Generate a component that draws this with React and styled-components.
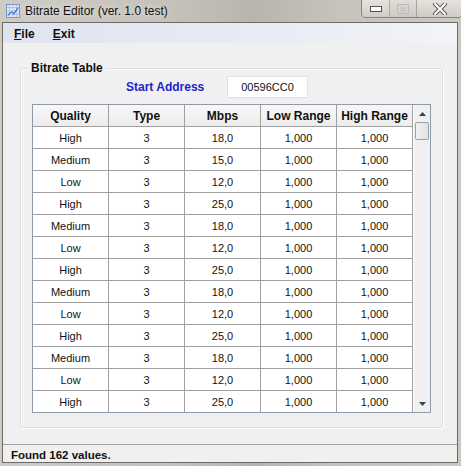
import React from 'react'
import styled, { createGlobalStyle } from 'styled-components'

const GlobalStyle = createGlobalStyle`
    html, body {
        margin: 0;
        padding: 0;
        background: #c9c5be;
    }
    * { box-sizing: border-box; }
`

const rows = [
    ['High', '3', '18,0'],
    ['Medium', '3', '15,0'],
    ['Low', '3', '12,0'],
    ['High', '3', '25,0'],
    ['Medium', '3', '18,0'],
    ['Low', '3', '12,0'],
    ['High', '3', '25,0'],
    ['Medium', '3', '18,0'],
    ['Low', '3', '12,0'],
    ['High', '3', '25,0'],
    ['Medium', '3', '18,0'],
    ['Low', '3', '12,0'],
    ['High', '3', '25,0'],
]

function App() {
    return (
        <>
            <GlobalStyle />
            <Window>
                <TitleBar>
                    <AppIcon viewBox="0 0 16 16">
                        <rect x="0.5" y="0.5" width="15" height="15" fill="#dfe9f7" stroke="#6d8fc4" />
                        <path d="M1 4h14M1 8h14M1 12h14M4 1v14M8 1v14M12 1v14" stroke="#a9c0e2" strokeWidth="1" />
                        <path d="M2 13 L6 9 L9 11 L14 4" stroke="#3b64b8" strokeWidth="1.3" fill="none" />
                    </AppIcon>
                    <Title>Bitrate Editor (ver. 1.0 test)</Title>
                    <CaptionButtons>
                        <CaptionBtn>
                            <svg width="12" height="6" viewBox="0 0 12 6">
                                <rect x="0.5" y="0.5" width="11" height="5" fill="#fff" stroke="#555" />
                            </svg>
                        </CaptionBtn>
                        <CaptionBtn $faded>
                            <svg width="12" height="10" viewBox="0 0 12 10">
                                <rect x="0.5" y="0.5" width="11" height="9" fill="none" stroke="#bbb" />
                                <rect x="3" y="3" width="6" height="4" fill="#c8c8c8" />
                            </svg>
                        </CaptionBtn>
                        <CaptionBtn $wide>
                            <svg width="14" height="12" viewBox="0 0 14 12">
                                <path d="M2 1 L12 11 M12 1 L2 11" stroke="#555" strokeWidth="4" strokeLinecap="round" />
                                <path d="M2 1 L12 11 M12 1 L2 11" stroke="#fff" strokeWidth="2" strokeLinecap="round" />
                            </svg>
                        </CaptionBtn>
                    </CaptionButtons>
                </TitleBar>
                <Client>
                    <MenuBar>
                        <MenuItem><u>F</u>ile</MenuItem>
                        <MenuItem><u>E</u>xit</MenuItem>
                    </MenuBar>
                    <Body>
                        <GroupBox>
                            <GroupLegend>Bitrate Table</GroupLegend>
                            <AddressRow>
                                <AddressLabel>Start Address</AddressLabel>
                                <AddressInput>00596CC0</AddressInput>
                            </AddressRow>
                            <Grid>
                                <Table>
                                    <HeaderRow>
                                        <HeadCell>Quality</HeadCell>
                                        <HeadCell>Type</HeadCell>
                                        <HeadCell>Mbps</HeadCell>
                                        <HeadCell>Low Range</HeadCell>
                                        <HeadCell>High Range</HeadCell>
                                    </HeaderRow>
                                    {rows.map((r, i) => (
                                        <Row key={i}>
                                            <Cell>{r[0]}</Cell>
                                            <Cell>{r[1]}</Cell>
                                            <Cell>{r[2]}</Cell>
                                            <Cell>1,000</Cell>
                                            <Cell>1,000</Cell>
                                        </Row>
                                    ))}
                                </Table>
                                <ScrollBar>
                                    <ScrollArrow>
                                        <svg width="7" height="4" viewBox="0 0 7 4"><path d="M3.5 0 L7 4 L0 4 Z" fill="#404040" /></svg>
                                    </ScrollArrow>
                                    <Thumb />
                                    <Track />
                                    <ScrollArrow>
                                        <svg width="7" height="4" viewBox="0 0 7 4"><path d="M0 0 L7 0 L3.5 4 Z" fill="#404040" /></svg>
                                    </ScrollArrow>
                                </ScrollBar>
                            </Grid>
                        </GroupBox>
                    </Body>
                    <StatusBar>Found 162 values.</StatusBar>
                </Client>
            </Window>
        </>
    )
}

export default App

const Window = styled.div`
    width: 461px;
    height: 466px;
    display: flex;
    flex-direction: column;
    background: linear-gradient(90deg, #cfccc6 0%, #c4c0b9 40%, #b9b4ac 55%, #c8c4bd 75%, #cbc7c1 100%);
    font-family: "Liberation Sans", Arial, sans-serif;
    overflow: hidden;
`
const TitleBar = styled.div`
    flex-shrink: 0;
    height: 22px;
    display: flex;
    align-items: center;
    padding-left: 6px;
`
const AppIcon = styled.svg`
    width: 14px;
    height: 14px;
    margin-right: 5px;
`
const Title = styled.div`
    font-size: 12px;
    color: #111;
    text-shadow: 0 0 6px rgba(255,255,255,0.9);
    margin-top: -1px;
`
const CaptionButtons = styled.div`
    margin-left: auto;
    align-self: flex-start;
    display: flex;
    height: 18px;
    border: 1px solid #8a857e;
    border-top: none;
    border-radius: 0 0 5px 5px;
    overflow: hidden;
    margin-right: -2px;
`
const CaptionBtn = styled.div`
    width: ${p => (p.$wide ? '46px' : '27px')};
    display: flex;
    align-items: center;
    justify-content: center;
    background: linear-gradient(#e6e3df, #cfcbc5);
    border-left: 1px solid #a8a39c;
    opacity: ${p => (p.$faded ? 0.8 : 1)};
    &:first-child { border-left: none; }
`
const Client = styled.div`
    flex: 1;
    min-height: 0;
    margin: 0 3px 3px 2px;
    border: 1px solid #6e6a64;
    background: #f0f0f0;
    display: flex;
    flex-direction: column;
`
const MenuBar = styled.div`
    flex-shrink: 0;
    height: 20px;
    display: flex;
    align-items: center;
    gap: 18px;
    padding-left: 11px;
    padding-top: 1px;
    background: linear-gradient(90deg, #dfe4f0 0%, #e9ecf4 60%, #f3f4f8 100%);
`
const MenuItem = styled.div`
    font-size: 12px;
    font-weight: bold;
    color: #111;
`
const Body = styled.div`
    flex: 1;
    min-height: 0;
    padding: 25px 14px 16px 17px;
`
const GroupBox = styled.div`
    position: relative;
    height: 100%;
    border: 1px solid #d5dfe5;
    border-radius: 3px;
    box-shadow: inset 1px 1px 0 #fff, 1px 1px 0 #fff;
    padding: 7px 11px 0 11px;
`
const GroupLegend = styled.div`
    position: absolute;
    top: -8px;
    left: 7px;
    padding: 0 3px;
    background: #f0f0f0;
    font-size: 12px;
    font-weight: bold;
    color: #111;
`
const AddressRow = styled.div`
    display: flex;
    align-items: center;
    height: 22px;
    padding-left: 94px;
`
const AddressLabel = styled.div`
    font-size: 12px;
    font-weight: bold;
    color: #2323c8;
    width: 101px;
`
const AddressInput = styled.div`
    width: 81px;
    height: 22px;
    background: #fff;
    border: 1px solid #dfe3e8;
    font-size: 11px;
    display: flex;
    align-items: center;
    justify-content: center;
    color: #111;
`
const Grid = styled.div`
    margin-top: 6px;
    display: flex;
    width: 399px;
    height: 309px;
    overflow: hidden;
    border: 1px solid #8e9ba8;
    background: #fff;
`
const Table = styled.div`
    width: 380px;
    display: flex;
    flex-direction: column;
`
const HeaderRow = styled.div`
    flex-shrink: 0;
    display: grid;
    grid-template-columns: 76px 76px 76px 76px 76px;
    height: 22px;
    background: linear-gradient(#f7f7f7, #ececec);
`
const Row = styled.div`
    flex-shrink: 0;
    display: grid;
    grid-template-columns: 76px 76px 76px 76px 76px;
    height: 22px;
`
const HeadCell = styled.div`
    display: flex;
    align-items: center;
    justify-content: center;
    font-size: 12px;
    font-weight: bold;
    color: #111;
    border-right: 1px solid #a0a0a0;
    border-bottom: 1px solid #a0a0a0;
`
const Cell = styled.div`
    display: flex;
    align-items: center;
    justify-content: center;
    font-size: 11px;
    color: #111;
    border-right: 1px solid #a0a0a0;
    border-bottom: 1px solid #a0a0a0;
`
const ScrollBar = styled.div`
    width: 17px;
    display: flex;
    flex-direction: column;
    background: #f0f0f0;
    margin-left: 1px;
`
const ScrollArrow = styled.div`
    height: 17px;
    display: flex;
    align-items: center;
    justify-content: center;
`
const Thumb = styled.div`
    height: 18px;
    margin: 0 1px;
    border: 1px solid #9aa0a8;
    border-radius: 2px;
    background: linear-gradient(90deg, #f2f2f2, #e2e2e2);
`
const Track = styled.div`
    flex: 1;
`
const StatusBar = styled.div`
    flex-shrink: 0;
    height: 18px;
    border-top: 1px solid #a0a0a0;
    display: flex;
    align-items: center;
    padding: 2px 0 0 8px;
    font-size: 11.5px;
    font-weight: bold;
    color: #111;
`
